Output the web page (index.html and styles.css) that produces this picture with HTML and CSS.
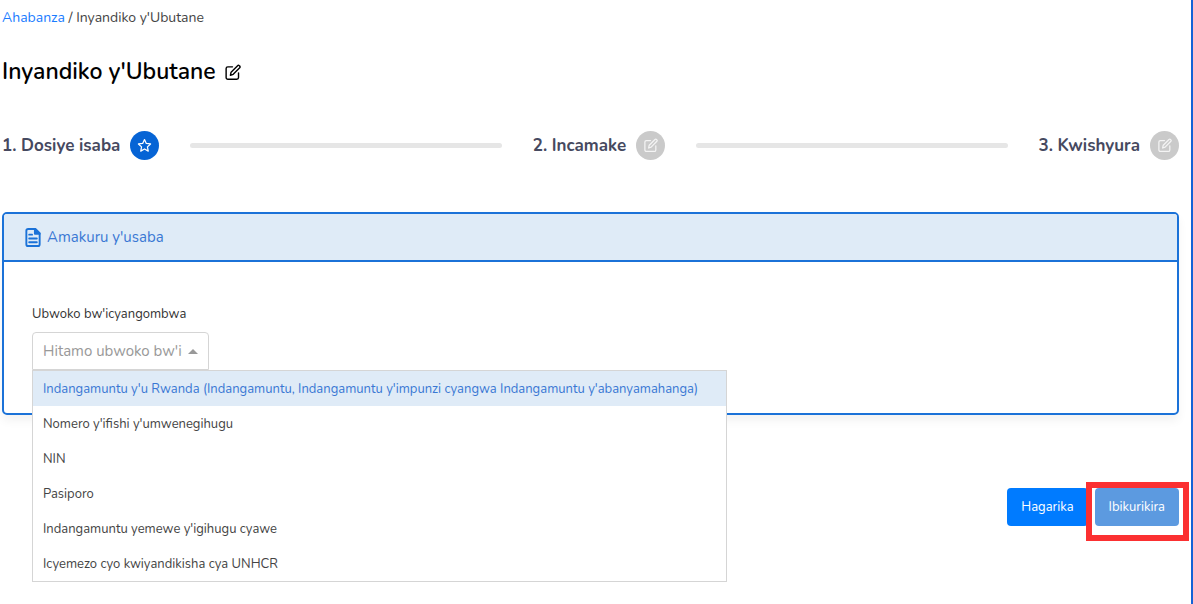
FILE: index.html
```html
<!DOCTYPE html>
<html lang="rw">
<head>
    <meta charset="UTF-8">
    <meta name="viewport" content="width=device-width, initial-scale=1">
    <title>Inyandiko y'Ubutane</title>
    <link rel="stylesheet" href="styles.css">
</head>
<body>
    <!-- shared icons -->
    <svg class="sprite" aria-hidden="true">
        <symbol id="edit" viewBox="0 0 24 24">
            <path d="M12 4H5.500a2.500 2.500 0 0 0-2.500 2.500V19a2.500 2.500 0 0 0 2.500 2.500H18a2.500 2.500 0 0 0 2.500-2.500v-6.500"/>
            <path d="M9 16l1-4.500L19.200 2.300a1.600 1.600 0 0 1 2.300 0l.7.7a1.600 1.600 0 0 1 0 2.300L13 14.600z"/>
        </symbol>
    </svg>

    <main class="page">
        <nav class="breadcrumb">
            <a href="#">Ahabanza</a> / <span>Inyandiko y'Ubutane</span>
        </nav>

        <h1 class="title">Inyandiko y'Ubutane
            <svg class="title-icon"><use href="#edit"/></svg>
        </h1>

        <div class="steps">
            <div class="step">
                <span>1. Dosiye isaba</span>
                <span class="step-icon active">
                    <svg viewBox="0 0 24 24"><path d="M12 2.500l2.900 6.200 6.800.8-5 4.700 1.300 6.800-6-3.400L6 21l1.300-6.800-5-4.700 6.800-.8z"/></svg>
                </span>
            </div>
            <div class="step-line"></div>
            <div class="step">
                <span>2. Incamake</span>
                <span class="step-icon"><svg><use href="#edit"/></svg></span>
            </div>
            <div class="step-line"></div>
            <div class="step">
                <span>3. Kwishyura</span>
                <span class="step-icon"><svg><use href="#edit"/></svg></span>
            </div>
        </div>

        <section class="card">
            <h2 class="card-header">
                <svg class="card-icon" viewBox="0 0 16 20">
                    <path d="M3 1h7.500L15 5.500V17a2 2 0 0 1-2 2H3a2 2 0 0 1-2-2V3a2 2 0 0 1 2-2z"/>
                    <path class="fold" d="M10 1v5h5z"/>
                    <path d="M4 7h3M4 11h8M4 15h8"/>
                </svg>
                Amakuru y'usaba
            </h2>
            <div class="card-body">
                <label for="docType">Ubwoko bw'icyangombwa</label>
                <div class="dropdown">
                    <div class="dropdown-box">
                        <select id="docType">
                            <option value="">Hitamo ubwoko bw'icyangombwa</option>
                            <option>Indangamuntu y'u Rwanda</option>
                            <option>Nomero y'ifishi y'umwenegihugu</option>
                            <option>NIN</option>
                            <option>Pasiporo</option>
                        </select>
                        <span class="arrow"></span>
                    </div>
                    <ul class="dropdown-menu" role="listbox" aria-label="Ubwoko bw'icyangombwa">
                        <li class="marked" role="option" aria-selected="true">Indangamuntu y'u Rwanda (Indangamuntu, Indangamuntu y'impunzi cyangwa Indangamuntu y'abanyamahanga)</li>
                        <li role="option">Nomero y'ifishi y'umwenegihugu</li>
                        <li role="option">NIN</li>
                        <li role="option">Pasiporo</li>
                        <li role="option">Indangamuntu yemewe y'igihugu cyawe</li>
                        <li role="option">Icyemezo cyo kwiyandikisha cya UNHCR</li>
                    </ul>
                </div>
            </div>
        </section>

        <div class="actions">
            <button type="button" class="btn">Hagarika</button>
            <div class="highlight">
                <button type="button" class="btn btn-next">Ibikurikira</button>
            </div>
        </div>
    </main>
</body>
</html>
```
FILE: styles.css
```css
* {
    box-sizing: border-box;
}
body {
    margin: 0;
    font-family: Nunito, "Noto Sans", sans-serif;
    font-size: 13px;
    line-height: 20px;
    color: #444;
    background-color: white;
}
svg {
    fill: none;
    stroke: currentColor;
    stroke-width: 2;
    stroke-linejoin: round;
    stroke-linecap: round;
}
.sprite {
    display: none;
}
.page {
    min-height: 100vh;
    padding: 8px 12px 20px 2px;
    border-right: 2px solid #1462d6;
}

.breadcrumb {
    font-size: 14px;
}
.breadcrumb a {
    color: #1a7cff;
    text-decoration: none;
}
.title {
    display: flex;
    align-items: center;
    gap: 8px;
    margin: 28px 0 43px;
    font-size: 23px;
    line-height: 32px;
    font-weight: 600;
    color: #000;
}
.title-icon {
    width: 17px;
    height: 17px;
}

/* steps */
.steps {
    display: flex;
    align-items: center;
    margin-bottom: 52px;
}
.step {
    display: flex;
    align-items: center;
    gap: 10px;
    font-size: 17px;
    font-weight: 700;
    color: #46495f;
}
.step-icon {
    display: flex;
    align-items: center;
    justify-content: center;
    width: 29px;
    height: 29px;
    border-radius: 50%;
    background-color: #cacaca;
    color: #f4f4f4;
}
.step-icon.active {
    background-color: #0664d5;
    color: white;
}
.step-icon svg {
    width: 15px;
    height: 15px;
}
.step-line {
    flex: 1;
    height: 5px;
    margin: 0 31px;
    border-radius: 3px;
    background-color: #e6e6e6;
}

/* card */
.card {
    border: 2px solid #1b72d8;
    border-radius: 5px;
    box-shadow: 0 6px 10px rgba(0, 0, 0, 0.05);
}
.card-header {
    display: flex;
    align-items: center;
    gap: 6px;
    height: 48px;
    margin: 0;
    padding: 0 21px;
    border-bottom: 2px solid #1b72d8;
    border-radius: 3px 3px 0 0;
    background-color: #dfebf7;
    color: #3a78d4;
    font-size: 15px;
    font-weight: 400;
}
.card-icon {
    width: 16px;
    height: 19px;
    color: #1b72d8;
}
.card-icon .fold {
    fill: currentColor;
}
.card-body {
    padding: 42px 28px 43px;
}
.card-body label {
    display: block;
    margin-bottom: 8px;
    color: #333;
}
.dropdown {
    position: relative;
}
.dropdown-box {
    display: flex;
    align-items: center;
    width: 177px;
    height: 38px;
    padding: 0 10px;
    border: 1px solid #d5d5d5;
    border-radius: 4px 4px 0 0;
}
.dropdown-box select {
    flex: 1;
    min-width: 0;
    padding: 0;
    border: none;
    outline: none;
    appearance: none;
    background: none;
    font-family: inherit;
    font-size: 15px;
    color: #999;
}
.arrow {
    margin-left: 6px;
    border: 5px solid transparent;
    border-top: none;
    border-bottom-color: #999;
}
.dropdown-menu {
    position: absolute;
    top: 100%;
    left: 0;
    min-width: 695px;
    margin: 0;
    padding: 0;
    list-style: none;
    white-space: nowrap;
    border: 1px solid #d5d5d5;
    background-color: white;
}
.dropdown-menu li {
    padding: 8px 10px 7px;
}
.dropdown-menu .marked {
    background-color: #dfebf7;
    color: #3a78d4;
}

/* buttons */
.actions {
    display: flex;
    justify-content: flex-end;
    gap: 7px;
    margin-top: 73px;
}
.btn {
    height: 38px;
    padding: 0 14px;
    border: none;
    border-radius: 4px;
    background-color: #007bff;
    color: white;
    font-family: inherit;
    font-size: 13px;
    cursor: pointer;
}
.btn-next {
    background-color: #5c9ae0;
}
.highlight {
    position: relative;
}
.highlight::after {
    content: "";
    position: absolute;
    top: -6px;
    right: -10px;
    bottom: -15px;
    left: -9px;
    border: 6px solid #fb3031;
    pointer-events: none;
}
```
